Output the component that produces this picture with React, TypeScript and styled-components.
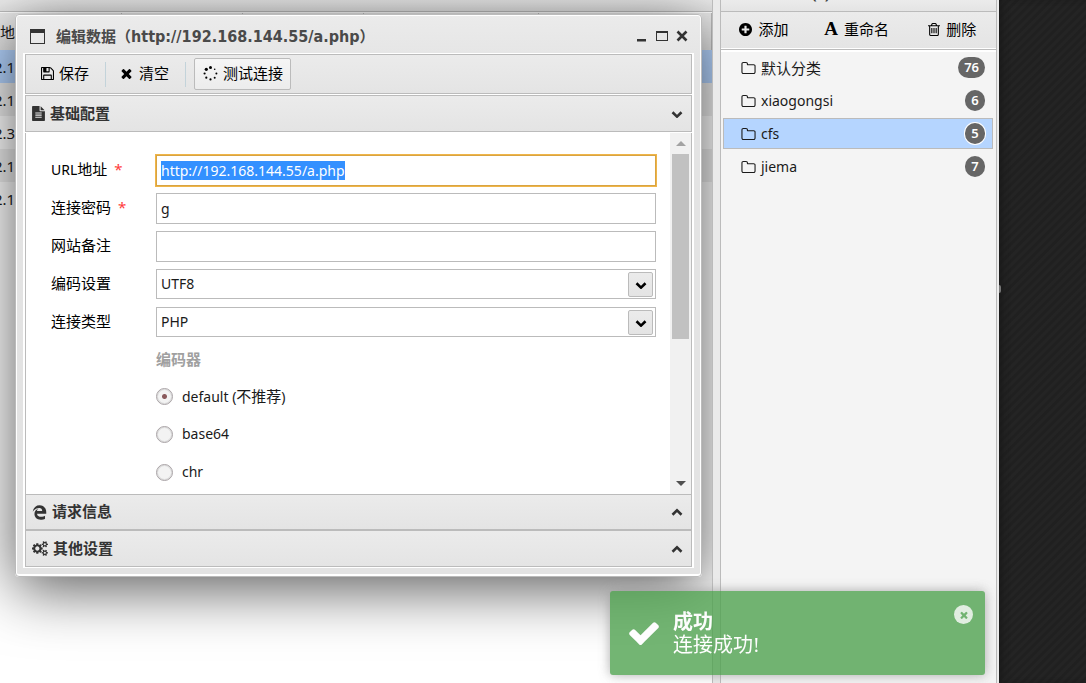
import React, { useEffect, useRef, useState } from "react";
import styled, { createGlobalStyle, css } from "styled-components";
import { FaEdgeLegacy } from "react-icons/fa";

const line = "#bbbbbb";
const bar = "linear-gradient(#ebebeb, #e4e4e4)";
const latin = `"Noto Sans", "Noto Sans CJK SC", sans-serif`;

const GlobalStyle = createGlobalStyle`
  * { box-sizing: border-box; }
  body {
    margin: 0;
    background: #222222;
    color: #1a1a1a;
    font: 14px/20px ${latin};
  }
  button, input, select { font: inherit; color: inherit; margin: 0; }
`;

/* ---------- icons ---------- */

const Svg = styled.svg<{ $w: number; $h: number }>`
  display: block;
  flex: none;
  width: ${(p) => p.$w}px;
  height: ${(p) => p.$h}px;
  fill: currentColor;
`;

const paths = {
  save: "M512 1536h768v-384h-768v384zm896 0h128v-896q0-14-10-38.5t-20-34.5l-281-281q-10-10-34-20t-39-10v416q0 40-28 68t-68 28h-576q-40 0-68-28t-28-68v-416h-128v1280h128v-416q0-40 28-68t68-28h832q40 0 68 28t28 68v416zm-384-928v-320q0-13-9.5-22.5t-22.5-9.5h-192q-13 0-22.5 9.5t-9.5 22.5v320q0 13 9.5 22.5t22.5 9.5h192q13 0 22.5-9.5t9.5-22.5zm640 32v928q0 40-28 68t-68 28h-1344q-40 0-68-28t-28-68v-1344q0-40 28-68t68-28h928q40 0 88 20t76 48l280 280q28 28 48 76t20 88z",
  times: "M1490 1322q0 40-28 68l-136 136q-28 28-68 28t-68-28l-294-294-294 294q-28 28-68 28t-68-28l-136-136q-28-28-28-68t28-68l294-294-294-294q-28-28-28-68t28-68l136-136q28-28 68-28t68 28l294 294 294-294q28-28 68-28t68 28l136 136q28 28 28 68t-28 68l-294 294 294 294q28 28 28 68z",
  plus: "M1344 960v-128q0-26-19-45t-45-19h-256v-256q0-26-19-45t-45-19h-128q-26 0-45 19t-19 45v256h-256q-26 0-45 19t-19 45v128q0 26 19 45t45 19h256v256q0 26 19 45t45 19h128q26 0 45-19t19-45v-256h256q26 0 45-19t19-45zm320-64q0 209-103 385.5t-279.5 279.5-385.5 103-385.5-103-279.5-279.5-103-385.5 103-385.5 279.5-279.5 385.5-103 385.5 103 279.5 279.5 103 385.5z",
  trash: "M704 736v576q0 14-9 23t-23 9h-64q-14 0-23-9t-9-23v-576q0-14 9-23t23-9h64q14 0 23 9t9 23zm256 0v576q0 14-9 23t-23 9h-64q-14 0-23-9t-9-23v-576q0-14 9-23t23-9h64q14 0 23 9t9 23zm256 0v576q0 14-9 23t-23 9h-64q-14 0-23-9t-9-23v-576q0-14 9-23t23-9h64q14 0 23 9t9 23zm128 724v-948h-896v948q0 22 7 40.5t14.5 27 10.5 8.5h832q3 0 10.5-8.5t14.5-27 7-40.5zm-672-1076h448l-48-117q-7-9-17-11h-317q-10 2-17 11zm928 32v64q0 14-9 23t-23 9h-96v948q0 83-47 143.5t-113 60.5h-832q-66 0-113-58.5t-47-141.5v-952h-96q-14 0-23-9t-9-23v-64q0-14 9-23t23-9h309l70-167q15-37 54-63t79-26h320q40 0 79 26t54 63l70 167h309q14 0 23 9t9 23z",
  file: "M1596 476q14 14 28 36h-472v-472q22 14 36 28zm-476 164h544v1056q0 40-28 68t-68 28h-1344q-40 0-68-28t-28-68v-1600q0-40 28-68t68-28h800v544q0 40 28 68t68 28zm160 736v-64q0-14-9-23t-23-9h-704q-14 0-23 9t-9 23v64q0 14 9 23t23 9h704q14 0 23-9t9-23zm0-256v-64q0-14-9-23t-23-9h-704q-14 0-23 9t-9 23v64q0 14 9 23t23 9h704q14 0 23-9t9-23zm0-256v-64q0-14-9-23t-23-9h-704q-14 0-23 9t-9 23v64q0 14 9 23t23 9h704q14 0 23-9t9-23z",
  folder: "M1600 1312v-704q0-40-28-68t-68-28h-704q-40 0-68-28t-28-68v-64q0-40-28-68t-68-28h-320q-40 0-68 28t-28 68v960q0 40 28 68t68 28h1216q40 0 68-28t28-68zm128-704v704q0 92-66 158t-158 66h-1216q-92 0-158-66t-66-158v-960q0-92 66-158t158-66h320q92 0 158 66t66 158v32h672q92 0 158 66t66 158z",
  check: "M1671 566q0 40-28 68l-724 724-136 136q-28 28-68 28t-68-28l-136-136-362-362q-28-28-28-68t28-68l136-136q28-28 68-28t68 28l294 295 656-657q28-28 68-28t68 28l136 136q28 28 28 68z",
  cogs: "M896 896q0-106-75-181t-181-75-181 75-75 181 75 181 181 75 181-75 75-181zm768 512q0-52-38-90t-90-38-90 38-38 90q0 53 37.5 90.5t90.5 37.5 90.5-37.5 37.5-90.5zm0-1024q0-52-38-90t-90-38-90 38-38 90q0 53 37.5 90.5t90.5 37.5 90.5-37.5 37.5-90.5zm-384 421v185q0 10-7 19.5t-16 10.5l-155 24q-11 35-32 76 34 48 90 115 7 11 7 20 0 12-7 19-23 30-82.5 89.5t-78.5 59.5q-11 0-21-7l-115-90q-37 19-77 31-11 108-23 155-7 24-30 24h-186q-11 0-20-7.5t-10-17.5l-23-153q-34-10-75-31l-118 89q-7 7-20 7-11 0-21-8-144-133-144-160 0-9 7-19 10-14 41-53t47-61q-23-44-35-82l-152-24q-10-1-17-9.5t-7-19.5v-185q0-10 7-19.5t16-10.5l155-24q11-35 32-76-34-48-90-115-7-11-7-20 0-12 7-20 22-30 82-89t79-59q11 0 21 7l115 90q34-18 77-32 11-108 23-154 7-24 30-24h186q11 0 20 7.5t10 17.5l23 153q34 10 75 31l118-89q8-7 20-7 11 0 21 8 144 133 144 160 0 8-7 19-12 16-42 54t-45 60q23 48 34 82l152 23q10 2 17 10.5t7 19.5zm640 533v140q0 16-149 31-12 27-30 52 51 113 51 138 0 4-4 7-122 71-124 71-8 0-46-47t-52-68q-20 2-30 2t-30-2q-14 21-52 68t-46 47q-2 0-124-71-4-3-4-7 0-25 51-138-18-25-30-52-149-15-149-31v-140q0-16 149-31 13-29 30-52-51-113-51-138 0-4 4-7 4-2 35-20t59-34 30-16q8 0 46 46.5t52 67.5q20-2 30-2t30 2q51-71 92-112l6-2q4 0 124 70 4 3 4 7 0 25-51 138 17 23 30 52 149 15 149 31zm0-1024v140q0 16-149 31-12 27-30 52 51 113 51 138 0 4-4 7-122 71-124 71-8 0-46-47t-52-68q-20 2-30 2t-30-2q-14 21-52 68t-46 47q-2 0-124-71-4-3-4-7 0-25 51-138-18-25-30-52-149-15-149-31v-140q0-16 149-31 13-29 30-52-51-113-51-138 0-4 4-7 4-2 35-20t59-34 30-16q8 0 46 46.5t52 67.5q20-2 30-2t30 2q51-71 92-112l6-2q4 0 124 70 4 3 4 7 0 25-51 138 17 23 30 52 149 15 149 31z",
};

/* Each glyph is cropped to its own drawn area. */
const boxes: Record<keyof typeof paths, string> = {
  save: "128 128 1536 1536",
  times: "302 238 1188 1316",
  plus: "128 128 1536 1536",
  trash: "192 128 1408 1536",
  file: "128 0 1536 1792",
  folder: "64 128 1664 1408",
  check: "121 270 1550 1252",
  cogs: "0 0 1920 1792",
};

const Icon = ({ name, w, h }: { name: keyof typeof paths; w: number; h: number }) => (
  <Svg $w={w} $h={h} viewBox={boxes[name]} aria-hidden>
    <path d={paths[name]} />
  </Svg>
);

const Spinner = () => (
  <Svg $w={15} $h={15} viewBox="0 0 15 15" aria-hidden>
    <circle cx="7.5" cy="1.6" r="1.5" />
    <circle cx="3.3" cy="3.3" r="1.6" />
    <circle cx="11.7" cy="3.3" r="0.8" />
    <circle cx="1.6" cy="7.5" r="1.1" />
    <circle cx="13.4" cy="7.5" r="1" />
    <circle cx="3.3" cy="11.7" r="1.1" />
    <circle cx="11.7" cy="11.7" r="1" />
    <circle cx="7.5" cy="13.4" r="1.1" />
  </Svg>
);

const Chevron = ({ up = false }: { up?: boolean }) => (
  <Svg $w={12} $h={8} viewBox="0 0 12 8" aria-hidden>
    <path
      d={up ? "M1.5 6.7 6 2.4l4.5 4.3" : "M1.5 2.3 6 6.6l4.5-4.3"}
      fill="none"
      stroke="currentColor"
      strokeWidth="2.6"
    />
  </Svg>
);

/* ---------- page ---------- */

const Page = styled.div`
  display: grid;
  grid-template-columns: minmax(0, 1fr) 7px 279px 87px;
  min-height: 100vh;
`;

const Workspace = styled.main`
  position: relative;
  overflow: hidden;
  background: #ffffff;
  border-right: 1px solid ${line};
`;

const Gutter = styled.div`
  background: #eaeaea;
`;

const Backdrop = styled.div`
  position: relative;
  background: #222222
    repeating-linear-gradient(135deg, #202020 0 2px, #242424 3px 5px, #202020 6px);
  box-shadow: inset 6px 0 8px -4px #181818;
`;

const Handle = styled.span`
  position: absolute;
  left: 0;
  top: 285px;
  width: 2px;
  height: 8px;
  border-radius: 0 2px 2px 0;
  background: #777777;
`;

const PanelCap = styled.div`
  height: 12px;
  overflow: hidden;
  background: ${bar};
  border-bottom: 1px solid ${line};
`;

/* The grid is scrolled a little to the left behind the dialog. */
const Grid = styled.table`
  table-layout: fixed;
  border-collapse: collapse;
  width: calc(100% + 6px);
  margin: 1px 0 0 -6px;
  font-size: 15px;

  th {
    height: 37px;
    padding: 0 6px;
    background: ${bar};
    border-right: 1px solid ${line};
    font-weight: 400;
    text-align: left;
    white-space: nowrap;
  }

  td {
    height: 33px;
    padding: 0;
  }
`;

const GridRow = styled.tr<{ $tone: "on" | "even" | "odd" }>`
  background: ${(p) => ({ on: "#b5d5ff", even: "#efefef", odd: "#ffffff" })[p.$tone]};
`;

/* ---------- sidebar ---------- */

const Sidebar = styled.aside`
  background: #ebebeb;
  padding-right: 2px;
  display: flex;
`;

const SidePanel = styled.div`
  flex: 1;
  min-width: 0;
  background: #f4f4f4;
  border: solid ${line};
  border-width: 0 1px;
`;

const CapTitle = styled.div`
  padding-left: 91px;
  font-weight: 700;
  line-height: 20px;
  margin-top: -16px;
  color: #404040;
`;

const SideTools = styled.div`
  display: flex;
  height: 38px;
  background: ${bar};
  border-bottom: 1px solid ${line};
  box-shadow: inset 0 -1px #ffffff, 0 2px #ffffff;
`;

const SideTool = styled.button<{ $grow: number }>`
  position: relative;
  flex: ${(p) => p.$grow} 1 0;
  display: flex;
  align-items: center;
  justify-content: center;
  gap: 6px;
  padding: 0 0 3px 2px;
  border: 0;
  background: none;
  font-size: 15px;
  color: #000000;
  white-space: nowrap;

  & + &::before {
    content: "";
    position: absolute;
    left: 0;
    top: 6px;
    height: 25px;
    border-left: 1px solid #c3d3da;
  }
`;

const FontMark = styled.span`
  font: 700 19px/20px "Liberation Serif", serif;
`;

const Tree = styled.ul`
  list-style: none;
  margin: 0;
  padding: 2px 3px 0 2px;
  display: grid;
  gap: 2px;
`;

const TreeItem = styled.li<{ $on?: boolean }>`
  display: flex;
  align-items: center;
  height: 31px;
  padding: 0 7px 0 17px;
  gap: 5px;
  border: 1px solid transparent;
  ${(p) => p.$on && css`background: #b5d5ff; border-color: ${line};`}
`;

const TreeName = styled.span<{ $zh?: boolean }>`
  flex: 1;
  font-size: ${(p) => (p.$zh ? 15 : 14)}px;
`;

const Badge = styled.span<{ $ring?: boolean }>`
  min-width: 20px;
  padding: 0 6px;
  border-radius: 11px;
  background: #666666;
  color: #ffffff;
  font-size: 13px;
  font-weight: 600;
  line-height: 21px;
  text-align: center;
  ${(p) => p.$ring && css`box-shadow: 0 0 0 1px #ffffff;`}
`;

/* ---------- dialog ---------- */

const Dialog = styled.section`
  position: absolute;
  top: 14px;
  left: 15px;
  right: 10px;
  padding: 0 7px 8px;
  background: linear-gradient(#ebebeb, #e3e3e3 60px);
  border: 1px solid ${line};
  border-radius: 4px;
  box-shadow: inset 0 0 0 1px #ffffff, inset 0 -2px #ffffff,
    0 12px 60px rgba(0, 0, 0, 0.65);
`;

const TitleBar = styled.header`
  display: flex;
  align-items: center;
  height: 38px;
  padding: 4px 6px 0 7px;
  gap: 11px;
  color: #333333;
`;

const Title = styled.h1`
  flex: 1;
  margin: 0;
  font: 700 15px/20px "Noto Sans CJK SC", sans-serif;
  color: #4a4a4a;
  white-space: nowrap;

  span { font: 700 16px/20px "DejaVu Sans Condensed", "Noto Sans", sans-serif; }
`;

const WinButtons = styled.div`
  display: flex;
  gap: 8px;
`;

const WinButton = styled.button`
  width: 12px;
  height: 14px;
  padding: 0;
  border: 0;
  background: none;
`;

const Content = styled.div`
  padding: 1px 2px;
  background: #ffffff;
`;

const Toolbar = styled.div`
  display: flex;
  align-items: center;
  height: 40px;
  padding: 0 8px;
  background: ${bar};
  border: 1px solid ${line};
`;

const Tool = styled.button<{ $raised?: boolean; $gap?: number }>`
  display: flex;
  align-items: center;
  height: 32px;
  padding: 0 7px 2px ${(p) => (p.$raised ? 8 : 6)}px;
  gap: ${(p) => p.$gap ?? 5}px;
  border: 1px solid ${(p) => (p.$raised ? line : "transparent")};
  border-radius: 2px;
  background: ${(p) => (p.$raised ? "linear-gradient(#f5f5f5, #ececec)" : "none")};
  font-size: 15px;
  color: #000000;
`;

const Divider = styled.span`
  height: 25px;
  margin: 0 8px;
  border-left: 1px solid #c3d3da;
`;

const SectionBar = styled.button<{ $tall?: boolean }>`
  display: flex;
  align-items: center;
  width: 100%;
  height: ${(p) => (p.$tall ? 37 : 36)}px;
  padding: 0 8px 0 6px;
  gap: 5px;
  background: ${bar};
  border: 1px solid ${line};
  color: #333333;
  font-size: 15px;
  font-weight: 700;
  text-align: left;

  span {
    flex: 1;
    padding-bottom: 2px;
  }
`;

const SectionBody = styled.div`
  display: flex;
  height: 361px;
  margin-top: 1px;
  border: solid ${line};
  border-width: 0 1px;
  overflow: hidden;
`;

const Section = styled.div`
  margin-top: 1px;
`;

const Form = styled.form`
  flex: 1;
  min-width: 0;
  padding: 22px 14px 0 25px;
  display: flex;
  flex-direction: column;
  gap: 7px;
`;

const Field = styled.div`
  display: grid;
  grid-template-columns: 105px minmax(0, 1fr);
  align-items: start;
  height: 31px;
`;

const Label = styled.label`
  padding-top: 4px;
  font-size: 15px;
  color: #000000;

  small { font-size: 14px; }
  i { margin-left: 7px; font-style: normal; color: #ff3b3b; }
`;

const control = css`
  display: block;
  width: 100%;
  padding: 0 4px;
  border: 1px solid ${line};
  border-radius: 0;
  background: #ffffff;
  outline: none;
`;

const TextInput = styled.input`
  ${control}
  height: 31px;

  &:focus {
    border-color: #d9a441;
    box-shadow: 0 0 0 1px #efb549;
  }
  &::selection { background: #3390ff; color: #ffffff; }
`;

const SelectWrap = styled.div`
  position: relative;
`;

const Select = styled.select`
  ${control}
  appearance: none;
  height: 30px;
`;

const SelectArrow = styled.span`
  position: absolute;
  top: 3px;
  right: 3px;
  width: 25px;
  height: 25px;
  display: flex;
  align-items: center;
  justify-content: center;
  border: 1px solid ${line};
  border-radius: 2px;
  background: ${bar};
  color: #000000;
  pointer-events: none;
`;

const Encoders = styled.fieldset`
  margin: 0 0 0 105px;
  padding: 0;
  border: 0;
`;

const Legend = styled.legend`
  padding: 0;
  height: 32px;
  line-height: 29px;
  font-size: 15px;
  font-weight: 700;
  color: #a0a0a0;
`;

const Choice = styled.label`
  display: flex;
  align-items: center;
  gap: 9px;
  height: 38px;

  b { font-size: 15px; font-weight: 400; }
`;

const Radio = styled.input`
  appearance: none;
  width: 17px;
  height: 17px;
  border: 1px solid #a9a3a6;
  border-radius: 50%;
  background: #f3f3f3;
  box-shadow: inset 0 0 0 1px #dcdcdc;

  &:checked {
    background: radial-gradient(#8a5a5c 2px, #f3f3f3 3px);
  }
`;

const ScrollTrack = styled.div`
  width: 21px;
  padding: 0 2px;
  display: flex;
  flex-direction: column;
  background: #f1f1f1;
`;

const ScrollArrow = styled.span<{ $down?: boolean }>`
  display: flex;
  align-items: center;
  justify-content: center;
  height: 21px;
  margin-top: ${(p) => (p.$down ? "auto" : 0)};
  color: ${(p) => (p.$down ? "#505050" : "#a3a3a3")};
`;

const ScrollThumb = styled.div`
  height: 185px;
  background: #c1c1c1;
`;

/* ---------- toast ---------- */

const Toast = styled.div`
  position: fixed;
  right: 101px;
  bottom: 8px;
  width: 375px;
  height: 84px;
  padding: 0 12px 0 19px;
  display: flex;
  align-items: center;
  gap: 14px;
  border-radius: 3px;
  background: #51a351;
  box-shadow: 0 0 12px #999999;
  color: #ffffff;
  opacity: 0.8;
  font: 20px/23px "Liberation Serif", "Noto Sans CJK SC", serif;
`;

const ToastText = styled.div`
  flex: 1;
  padding-top: 2px;

  strong { display: block; }
`;

const ToastClose = styled.button`
  align-self: flex-start;
  display: flex;
  align-items: center;
  justify-content: center;
  width: 19px;
  height: 19px;
  margin-top: 14px;
  padding: 0;
  border: 0;
  border-radius: 50%;
  background: #ffffff;
  color: #51a351;
  opacity: 0.8;
`;

const rows = [
  { ip: "2.1", tone: "on" },
  { ip: "2.1", tone: "even" },
  { ip: "2.3", tone: "odd" },
  { ip: "2.1", tone: "even" },
  { ip: "2.1", tone: "odd" },
] as const;

const groups = [
  { name: "默认分类", count: 76, zh: true },
  { name: "xiaogongsi", count: 6 },
  { name: "cfs", count: 5, on: true },
  { name: "jiema", count: 7 },
];

export default function App() {
  const url = useRef<HTMLInputElement>(null);
  const [encoder, setEncoder] = useState("default");

  useEffect(() => {
    url.current?.focus();
    url.current?.select();
  }, []);

  return (
    <Page>
      <GlobalStyle />
      <Workspace>
        <PanelCap />
        <Grid>
          <colgroup>
            <col width={127} />
            <col width={121} />
            <col width={121} />
            <col width={175} />
            <col />
          </colgroup>
          <thead>
            <tr>
              <th>地址</th>
              <th />
              <th />
              <th />
              <th />
            </tr>
          </thead>
          <tbody>
            {rows.map((r, i) => (
              <GridRow key={i} $tone={r.tone}>
                <td colSpan={5}>{r.ip}</td>
              </GridRow>
            ))}
          </tbody>
        </Grid>

        <Dialog role="dialog" aria-labelledby="dialog-title">
          <TitleBar>
            <Svg $w={15} $h={15} viewBox="0 0 15 15" aria-hidden>
              <path d="M0 0h15v15H0zM1 4v10h13V4z" fillRule="evenodd" />
            </Svg>
            <Title id="dialog-title">
              编辑数据（<span>http://192.168.144.55/a.php</span>）
            </Title>
            <WinButtons>
              <WinButton aria-label="最小化">
                <Svg $w={12} $h={14} viewBox="0 0 12 14" aria-hidden>
                  <path d="M1 10h9v2.500H1z" />
                </Svg>
              </WinButton>
              <WinButton aria-label="最大化">
                <Svg $w={12} $h={14} viewBox="0 0 12 14" aria-hidden>
                  <path d="M0 2h12v10H0zM1 4v7h10V4z" fillRule="evenodd" />
                </Svg>
              </WinButton>
              <WinButton aria-label="关闭">
                <Svg $w={12} $h={14} viewBox="0 0 12 14" aria-hidden>
                  <path d="M1.500 2.500l9 9M10.500 2.500l-9 9" stroke="currentColor" strokeWidth="2.600" />
                </Svg>
              </WinButton>
            </WinButtons>
          </TitleBar>

          <Content>
            <Toolbar>
              <Tool>
                <Icon name="save" w={13} h={13} />
                保存
              </Tool>
              <Divider />
              <Tool $gap={7}>
                <Icon name="times" w={11} h={11} />
                清空
              </Tool>
              <Divider />
              <Tool $raised>
                <Spinner />
                测试连接
              </Tool>
            </Toolbar>

            <Section>
              <SectionBar $tall aria-expanded>
                <Icon name="file" w={13} h={15} />
                <span>基础配置</span>
                <Chevron />
              </SectionBar>
              <SectionBody>
                <Form>
                  <Field>
                    <Label htmlFor="url">
                      <small>URL</small>地址<i>*</i>
                    </Label>
                    <TextInput id="url" ref={url} defaultValue="http://192.168.144.55/a.php" />
                  </Field>
                  <Field>
                    <Label htmlFor="pwd">
                      连接密码<i>*</i>
                    </Label>
                    <TextInput id="pwd" defaultValue="g" />
                  </Field>
                  <Field>
                    <Label htmlFor="note">网站备注</Label>
                    <TextInput id="note" />
                  </Field>
                  <Field>
                    <Label htmlFor="charset">编码设置</Label>
                    <SelectWrap>
                      <Select id="charset">
                        <option>UTF8</option>
                      </Select>
                      <SelectArrow>
                        <Chevron />
                      </SelectArrow>
                    </SelectWrap>
                  </Field>
                  <Field>
                    <Label htmlFor="kind">连接类型</Label>
                    <SelectWrap>
                      <Select id="kind">
                        <option>PHP</option>
                      </Select>
                      <SelectArrow>
                        <Chevron />
                      </SelectArrow>
                    </SelectWrap>
                  </Field>
                  <Encoders>
                    <Legend>编码器</Legend>
                    {["default", "base64", "chr"].map((name) => (
                      <Choice key={name}>
                        <Radio
                          type="radio"
                          name="encoder"
                          checked={encoder === name}
                          onChange={() => setEncoder(name)}
                        />
                        {name === "default" ? (
                          <span>
                            default (<b>不推荐</b>)
                          </span>
                        ) : (
                          <span>{name}</span>
                        )}
                      </Choice>
                    ))}
                  </Encoders>
                </Form>
                <ScrollTrack>
                  <ScrollArrow>
                    <Svg $w={10} $h={5} viewBox="0 0 10 5" aria-hidden>
                      <path d="M0 5 5 0l5 5z" />
                    </Svg>
                  </ScrollArrow>
                  <ScrollThumb />
                  <ScrollArrow $down>
                    <Svg $w={10} $h={5} viewBox="0 0 10 5" aria-hidden>
                      <path d="M0 0l5 5 5-5z" />
                    </Svg>
                  </ScrollArrow>
                </ScrollTrack>
              </SectionBody>
            </Section>
            <SectionBar>
              <FaEdgeLegacy size={15} />
              <span>请求信息</span>
              <Chevron up />
            </SectionBar>
            <SectionBar $tall>
              <Icon name="cogs" w={16} h={15} />
              <span>其他设置</span>
              <Chevron up />
            </SectionBar>
          </Content>
        </Dialog>
      </Workspace>

      <Gutter />

      <Sidebar>
        <SidePanel>
          <PanelCap>
            <CapTitle>(4)</CapTitle>
          </PanelCap>
          <SideTools>
            <SideTool $grow={84}>
              <Icon name="plus" w={13} h={13} />
              添加
            </SideTool>
            <SideTool $grow={102}>
              <FontMark aria-hidden>A</FontMark>
              重命名
            </SideTool>
            <SideTool $grow={90}>
              <Icon name="trash" w={12} h={13} />
              删除
            </SideTool>
          </SideTools>
          <Tree>
            {groups.map((g) => (
              <TreeItem key={g.name} $on={g.on}>
                <Icon name="folder" w={15} h={12} />
                <TreeName $zh={g.zh}>{g.name}</TreeName>
                <Badge $ring={g.on}>{g.count}</Badge>
              </TreeItem>
            ))}
          </Tree>
        </SidePanel>
      </Sidebar>

      <Backdrop>
        <Handle />
      </Backdrop>

      <Toast role="status">
        <Icon name="check" w={30} h={24} />
        <ToastText>
          <strong>成功</strong>
          连接成功!
        </ToastText>
        <ToastClose aria-label="关闭">
          <Icon name="times" w={8} h={8} />
        </ToastClose>
      </Toast>
    </Page>
  );
}
